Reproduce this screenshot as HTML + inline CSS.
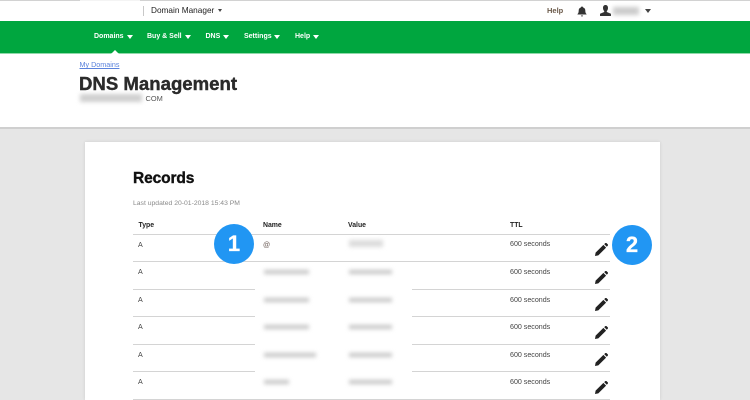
<!DOCTYPE html>
<html><head><meta charset="utf-8">
<style>
html,body{margin:0;padding:0}
body{width:750px;height:400px;position:relative;overflow:hidden;background:#e6e6e6;font-family:"Liberation Sans",sans-serif;color:#333}
.a{position:absolute;white-space:nowrap}
.tri{position:absolute;width:0;height:0;border-left:3px solid transparent;border-right:3px solid transparent;border-top:4px solid #fff}
.nav{font-size:7px;font-weight:bold;color:#fff;top:32px;line-height:10px}
.th{font-size:6.9px;font-weight:bold;color:#222;top:220.500px;line-height:9px}
.c{font-size:7.1px;color:#444;line-height:10px}
.ln{position:absolute;height:1px;background:#d4d4d4}
.bl{position:absolute;filter:blur(2px);white-space:nowrap}
.cir{position:absolute;width:40px;height:40px;border-radius:50%;background:#2196f3;color:#fff;font-weight:bold;font-size:22px;line-height:40px;text-align:center;-webkit-text-stroke:.3px #fff}
</style></head><body>
<div class="a" style="left:0;top:0;width:750px;height:127px;background:#fff"></div>
<div class="a" style="left:0;top:0;width:750px;height:1px;background:#d2d2d2"></div>
<div class="a" style="left:80px;top:0;width:60px;height:1px;background:#f4f4f4"></div>
<div class="a" style="left:143px;top:6px;width:1px;height:10px;background:#c8c8c8"></div>
<div class="a" style="left:151px;top:5px;font-size:8.250px;line-height:11px;color:#222">Domain Manager</div>
<div class="tri" style="left:218px;top:9px;border-left-width:2.5px;border-right-width:2.5px;border-top:3.5px solid #444"></div>
<div class="a" style="left:547px;top:6px;font-size:7.5px;font-weight:bold;line-height:10px;color:#6b5a4a">Help</div>
<svg class="a" style="left:577px;top:6px" width="10" height="11" viewBox="0 0 10 11"><path d="M5 0.5c.6 0 1 .4 1 .9 1.500.4 2.300 1.600 2.300 3.100 0 2 .4 2.800 1.200 3.500v.5H.5V8c.8-.7 1.200-1.500 1.200-3.500C1.700 3 2.500 1.800 4 1.400c0-.5.4-.9 1-.9zM3.900 9.500h2.200c0 .6-.5 1-1.100 1s-1.100-.4-1.100-1z" fill="#333"/></svg>
<svg class="a" style="left:600px;top:5px" width="11" height="11" viewBox="0 0 11 11"><path d="M5.500 0C7.200 0 8 1.200 8 3c0 1.300-.5 2.400-1.200 3v1L11 8.800V11H0V8.800L4.200 7V6C3.500 5.400 3 4.300 3 3c0-1.800.8-3 2.500-3z" fill="#333"/></svg>
<div class="bl" style="left:613px;top:7px;background:#ccc;width:26px;height:8px"></div>
<div class="tri" style="left:645px;top:9px;border-left-width:3px;border-right-width:3px;border-top:4px solid #444"></div>

<div class="a" style="left:0;top:21px;width:750px;height:32px;background:#00a63f"></div>
<div class="a" style="left:0;top:53px;width:750px;height:1px;background:#8fd9a9"></div>
<div class="a nav" style="left:94px">Domains</div><div class="tri" style="left:127px;top:35px"></div>
<div class="a nav" style="left:147px">Buy &amp; Sell</div><div class="tri" style="left:185px;top:35px"></div>
<div class="a nav" style="left:205.500px">DNS</div><div class="tri" style="left:223px;top:35px"></div>
<div class="a nav" style="left:244px">Settings</div><div class="tri" style="left:274px;top:35px"></div>
<div class="a nav" style="left:295px">Help</div><div class="tri" style="left:313px;top:35px"></div>
<div class="a" style="left:111px;top:50px;width:0;height:0;border-left:4px solid transparent;border-right:4px solid transparent;border-bottom:4px solid #fff"></div>

<div class="a" style="left:79.500px;top:60px;font-size:7.2px;line-height:10px;color:#5a82dc;text-decoration:underline">My Domains</div>
<div class="a" style="left:79px;top:72px;font-size:18.600px;line-height:24px;font-weight:bold;color:#2b2b2b;-webkit-text-stroke:.4px #2b2b2b">DNS Management</div>
<div class="bl" style="left:80px;top:94px;width:62px;height:8px;background:#cfcfcf"></div>
<div class="a" style="left:145.500px;top:93.500px;font-size:7.400px;line-height:10px;color:#555">COM</div>

<div class="a" style="left:0;top:127px;width:750px;height:2px;background:#cfcfcf"></div>

<div class="a" style="left:85px;top:142px;width:575px;height:258px;background:#fff;box-shadow:0 0 3px rgba(0,0,0,.12)"></div>
<div class="a" style="left:133px;top:169px;font-size:15.500px;line-height:20px;font-weight:bold;color:#111;-webkit-text-stroke:.4px #111;letter-spacing:-.1px">Records</div>
<div class="a" style="left:133px;top:198.500px;font-size:6.800px;line-height:10px;color:#8a8a8a">Last updated 20-01-2018 15:43 PM</div>

<div class="a th" style="left:138.500px">Type</div>
<div class="a th" style="left:263px">Name</div>
<div class="a th" style="left:348px">Value</div>
<div class="a th" style="left:510px">TTL</div>

<div class="ln" style="left:133px;top:234px;width:477px"></div>
<div class="ln" style="left:133px;top:261px;width:477px"></div>
<div class="ln" style="left:133px;top:289px;width:122px"></div><div class="ln" style="left:412px;top:289px;width:198px"></div>
<div class="ln" style="left:133px;top:316px;width:122px"></div><div class="ln" style="left:412px;top:316px;width:198px"></div>
<div class="ln" style="left:133px;top:344px;width:122px"></div><div class="ln" style="left:412px;top:344px;width:198px"></div>
<div class="ln" style="left:133px;top:371px;width:122px"></div><div class="ln" style="left:412px;top:371px;width:198px"></div>
<div class="ln" style="left:133px;top:399px;width:477px"></div>

<div class="a c" style="left:138px;top:240px">A</div>
<div class="a c" style="left:138px;top:267px">A</div>
<div class="a c" style="left:138px;top:295px">A</div>
<div class="a c" style="left:138px;top:322px">A</div>
<div class="a c" style="left:138px;top:350px">A</div>
<div class="a c" style="left:138px;top:377px">A</div>

<div class="a c" style="left:263px;top:240px;color:#6a5a55">@</div>
<div class="bl" style="left:349px;top:240px;width:34px;height:7px;background:#dcdcdc"></div>
<div class="bl" style="left:264px;top:270px;width:45px;height:4px;background:#c4c4c4"></div>
<div class="bl" style="left:349px;top:270px;width:43px;height:4px;background:#c4c4c4"></div>
<div class="bl" style="left:264px;top:297.500px;width:45px;height:4px;background:#c4c4c4"></div>
<div class="bl" style="left:349px;top:297.500px;width:43px;height:4px;background:#c4c4c4"></div>
<div class="bl" style="left:264px;top:325px;width:45px;height:4px;background:#c4c4c4"></div>
<div class="bl" style="left:349px;top:325px;width:43px;height:4px;background:#c4c4c4"></div>
<div class="bl" style="left:264px;top:352.500px;width:52px;height:4px;background:#c4c4c4"></div>
<div class="bl" style="left:349px;top:352.500px;width:43px;height:4px;background:#c4c4c4"></div>
<div class="bl" style="left:264px;top:380px;width:25px;height:4px;background:#c4c4c4"></div>
<div class="bl" style="left:349px;top:380px;width:43px;height:4px;background:#c4c4c4"></div>

<div class="a c" style="left:510px;top:239px">600 seconds</div>
<div class="a c" style="left:510px;top:267px">600 seconds</div>
<div class="a c" style="left:510px;top:295px">600 seconds</div>
<div class="a c" style="left:510px;top:322px">600 seconds</div>
<div class="a c" style="left:510px;top:350px">600 seconds</div>
<div class="a c" style="left:510px;top:377px">600 seconds</div>

<svg width="0" height="0" style="position:absolute"><defs><symbol id="p" viewBox="0 0 13 13"><path d="M0 13L.6 9.600 8.400 1.900 11.100 4.600 3.300 12.400zM9.200 1.100L10.400 0c.3-.3.700-.3 1 0L12.900 1.500c.3.300.3.700 0 1L11.800 3.700z" fill="#222"/></symbol></defs></svg>
<svg class="a" style="left:595px;top:243px" width="13" height="13"><use href="#p"/></svg>
<svg class="a" style="left:595px;top:271px" width="13" height="13"><use href="#p"/></svg>
<svg class="a" style="left:595px;top:298px" width="13" height="13"><use href="#p"/></svg>
<svg class="a" style="left:595px;top:326px" width="13" height="13"><use href="#p"/></svg>
<svg class="a" style="left:595px;top:353px" width="13" height="13"><use href="#p"/></svg>
<svg class="a" style="left:595px;top:381px" width="13" height="13"><use href="#p"/></svg>

<div class="cir" style="left:214px;top:224px">1</div>
<div class="cir" style="left:612px;top:225px">2</div>
</body></html>
